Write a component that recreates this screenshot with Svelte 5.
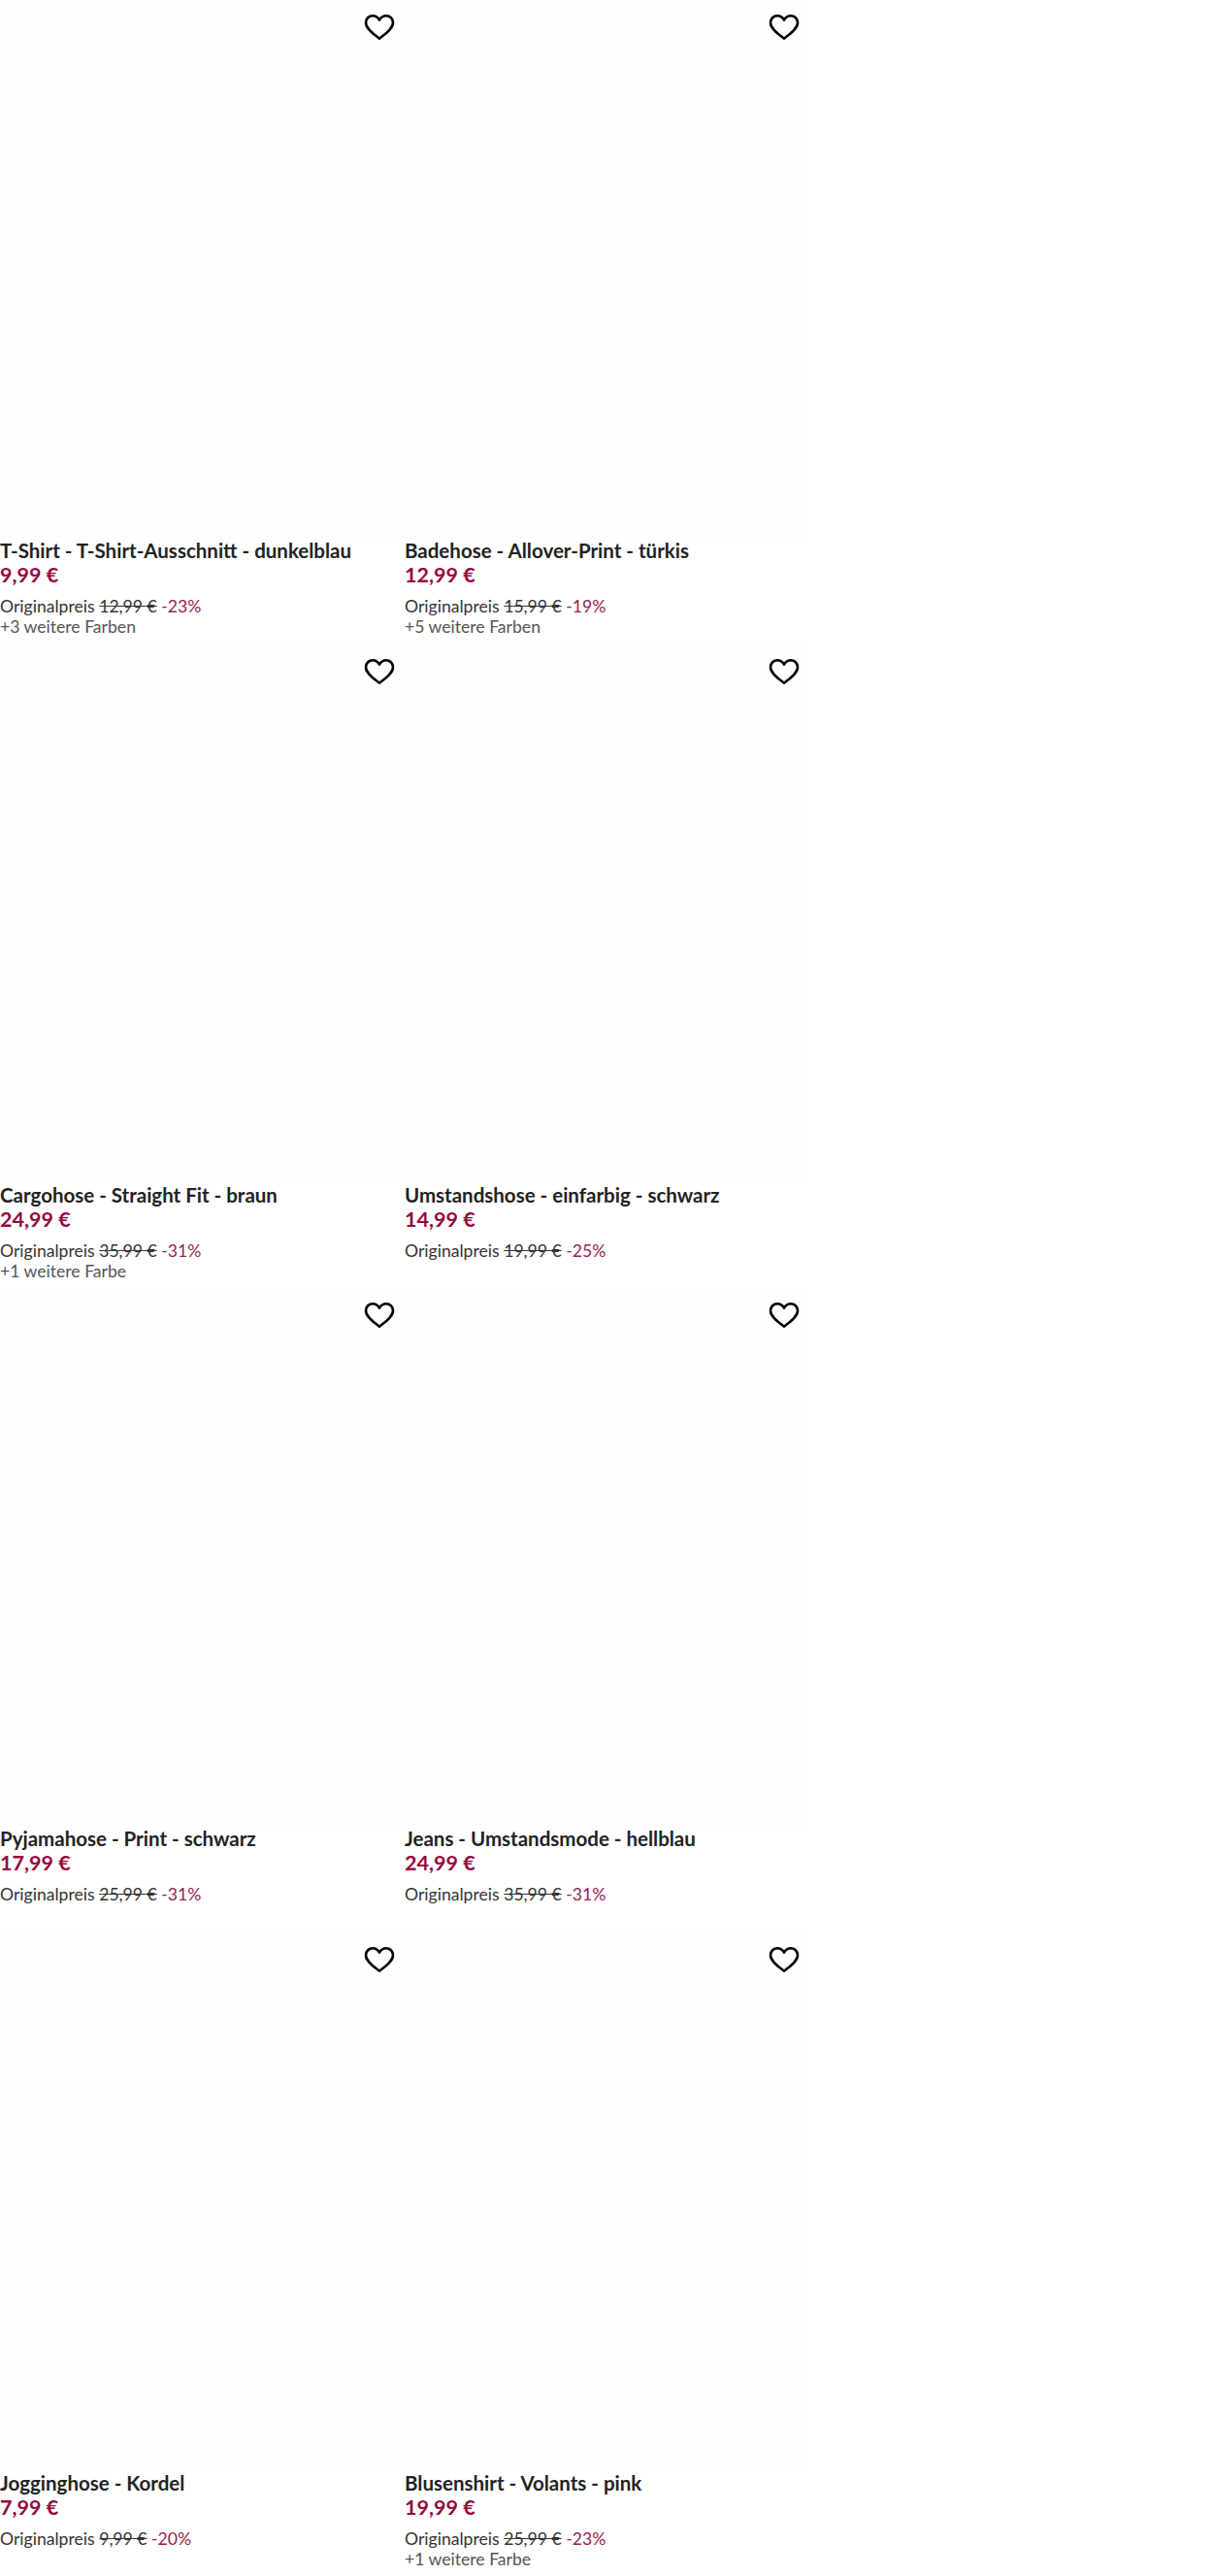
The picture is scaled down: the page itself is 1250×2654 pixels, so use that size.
<script>
  // Product tiles, two per row
  const products = [
    { title: 'T-Shirt - T-Shirt-Ausschnitt - dunkelblau', price: '9,99 €', original: '12,99 €', discount: '-23%', colors: '+3 weitere Farben' },
    { title: 'Badehose - Allover-Print - türkis', price: '12,99 €', original: '15,99 €', discount: '-19%', colors: '+5 weitere Farben' },
    { title: 'Cargohose - Straight Fit - braun', price: '24,99 €', original: '35,99 €', discount: '-31%', colors: '+1 weitere Farbe' },
    { title: 'Umstandshose - einfarbig - schwarz', price: '14,99 €', original: '19,99 €', discount: '-25%' },
    { title: 'Pyjamahose - Print - schwarz', price: '17,99 €', original: '25,99 €', discount: '-31%' },
    { title: 'Jeans - Umstandsmode - hellblau', price: '24,99 €', original: '35,99 €', discount: '-31%' },
    { title: 'Jogginghose - Kordel', price: '7,99 €', original: '9,99 €', discount: '-20%' },
    { title: 'Blusenshirt - Volants - pink', price: '19,99 €', original: '25,99 €', discount: '-23%', colors: '+1 weitere Farbe' }
  ];
</script>

<main class="grid">
  {#each products as product}
    <article class="card">
      <div class="image">
        <button type="button" class="wish" aria-label="Merken">
          <svg viewBox="0 0 32 28" width="32" height="28" aria-hidden="true">
            <path
              d="M16 25.6C10.6 21.6 2 15.6 2 9.4 2 5.2 5.2 2.2 9 2.2c3 0 5.4 1.6 7 4.4 1.6-2.8 4-4.4 7-4.4 3.8 0 7 3 7 7.2 0 6.2-8.600 12.200-14 16.200z"
              fill="none"
              stroke="#000"
              stroke-width="2.600"
              stroke-linejoin="round"
            />
          </svg>
        </button>
      </div>
      <h2 class="title">{product.title}</h2>
      <p class="price">{product.price}</p>
      <p class="original">
        Originalpreis <s>{product.original}</s> <span class="discount">{product.discount}</span>
      </p>
      {#if product.colors}
        <p class="colors">{product.colors}</p>
      {/if}
    </article>
  {/each}
</main>

<style>
  :global(body) {
    margin: 0;
    background: #fff;
  }

  .grid {
    display: grid;
    grid-template-columns: repeat(2, 417px);
    grid-auto-rows: 663.5px;
    font-family: Lato, "Open Sans", sans-serif;
  }

  .card {
    min-width: 0;
  }

  .image {
    position: relative;
    height: 555px;
    background: #fefefe;
  }

  .wish {
    position: absolute;
    top: 14px;
    right: 10px;
    padding: 0;
    border: 0;
    background: none;
    line-height: 0;
  }

  .title {
    margin: 0;
    font-size: 20.5px;
    line-height: 25px;
    font-weight: 700;
    color: #222;
  }

  .price {
    margin: 0 0 9px;
    font-size: 21.5px;
    line-height: 25px;
    font-weight: 700;
    color: #96063c;
  }

  .original {
    margin: 0;
    font-size: 17.6px;
    line-height: 21px;
    color: #333;
  }

  .discount {
    color: #96234f;
  }

  .colors {
    margin: 0;
    font-size: 17.6px;
    line-height: 22px;
    color: #555;
  }
</style>
